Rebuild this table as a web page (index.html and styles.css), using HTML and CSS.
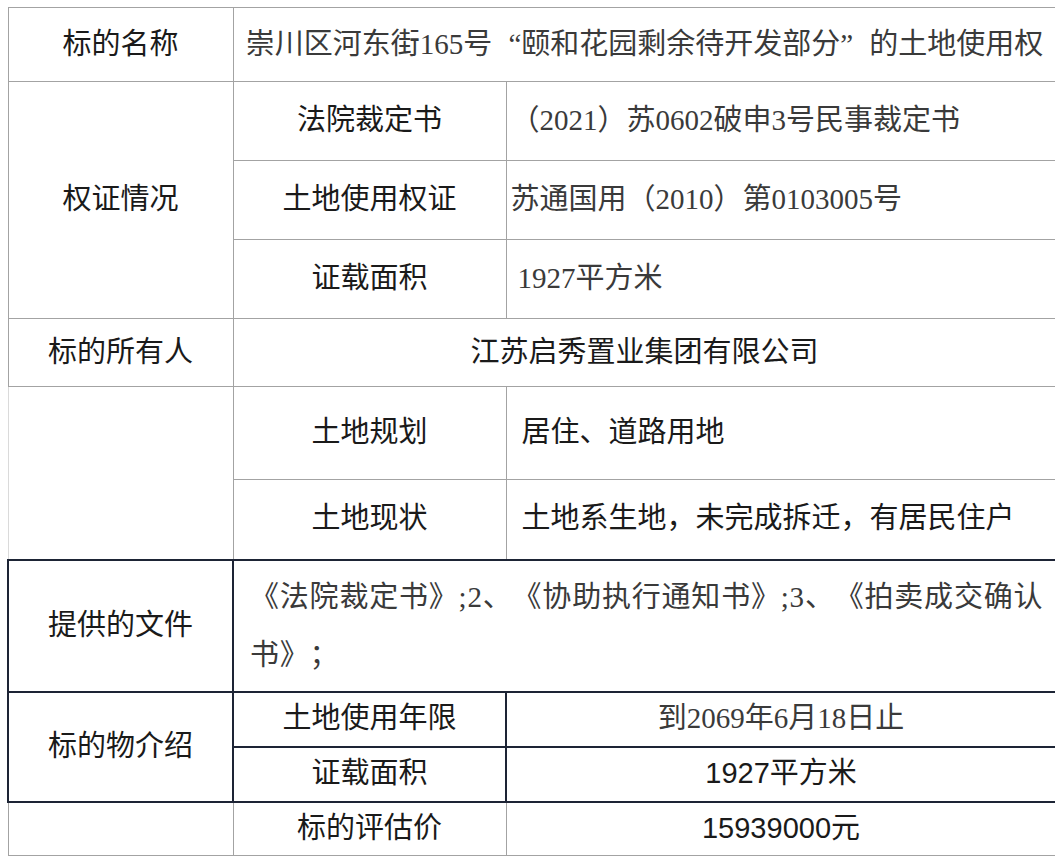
FILE: index.html
```html
<!DOCTYPE html>
<html lang="zh-CN">
<head>
<meta charset="utf-8">
<title>标的信息</title>
<link rel="stylesheet" href="styles.css">
</head>
<body>
<table class="info">
  <colgroup><col class="c1"><col class="c2"><col class="c3"></colgroup>
  <tr class="r1">
    <th>标的名称</th>
    <td colspan="2" class="serif center">崇川区河东街165号<span class="ql">“</span>颐和花园剩余待开发部分<span class="qr">”</span>的土地使用权</td>
  </tr>
  <tr class="r2">
    <th rowspan="3">权证情况</th>
    <th>法院裁定书</th>
    <td class="serif tight">（2021）苏0602破申3号民事裁定书</td>
  </tr>
  <tr class="r3">
    <th>土地使用权证</th>
    <td class="serif tight">苏通国用（2010）第0103005号</td>
  </tr>
  <tr class="r4">
    <th>证载面积</th>
    <td class="serif indent">1927平方米</td>
  </tr>
  <tr class="r5">
    <th>标的所有人</th>
    <td colspan="2" class="center">江苏启秀置业集团有限公司</td>
  </tr>
  <tr class="r6">
    <th rowspan="2" class="blank"></th>
    <th>土地规划</th>
    <td class="pad">居住、道路用地</td>
  </tr>
  <tr class="r7">
    <th>土地现状</th>
    <td class="pad">土地系生地，未完成拆迁，有居民住户</td>
  </tr>
  <tr class="r8 dark">
    <th>提供的文件</th>
    <td colspan="2" class="serif docs">《法院裁定书》;2、《协助执行通知书》;3、《拍卖成交确认书》；</td>
  </tr>
  <tr class="r9 dark">
    <th rowspan="2">标的物介绍</th>
    <th>土地使用年限</th>
    <td class="serif center">到2069年6月18日止</td>
  </tr>
  <tr class="r10 dark">
    <th>证载面积</th>
    <td class="center">1927平方米</td>
  </tr>
  <tr class="r11">
    <th></th>
    <th>标的评估价</th>
    <td class="center">15939000元</td>
  </tr>
</table>
</body>
</html>
```

FILE: styles.css
```css
html, body {
  background: #ffffff;
}
body {
  margin: 7px;
  font-family: "Liberation Sans", "Noto Sans CJK SC", sans-serif;
  color: #1a1a1a;
  text-spacing-trim: space-all;
}
.info {
  border-collapse: collapse;
  table-layout: fixed;
  width: 1048px;
  font-size: 29px;
  text-spacing-trim: space-all;
}
.c1 { width: 225px; }
.c2 { width: 273px; }
.c3 { width: 550px; }

.info th,
.info td {
  border: 1px solid #a3a3a3;
  font-weight: normal;
  vertical-align: middle;
  padding: 0;
  line-height: 1.3;
}
.info th {
  text-align: center;
  color: #1a1a1a;
}
.info td {
  text-align: left;
}
.serif {
  font-family: "Liberation Serif", "Noto Sans CJK SC", serif;
  color: #3a3a3a;
}
.center { text-align: center !important; }
.tight { padding-left: 4px !important; }
.indent { padding-left: 11px !important; }
.pad { padding-left: 15px !important; }

.ql, .qr {
  display: inline-block;
  width: 1em;
}
.ql { text-align: right; }
.qr { text-align: left; }

.r1 { height: 74px; }
.r2, .r3, .r4 { height: 79px; }
.r5 { height: 68px; }
.r6 { height: 93px; }
.r7 { height: 80px; }
.r8 { height: 132px; }
.r9, .r10 { height: 55px; }
.r11 { height: 54px; }

.blank {
  border-left-color: #dadada !important;
}

.dark th,
.dark td {
  border: 2px solid #1d2435;
}

.docs {
  line-height: 58px !important;
  letter-spacing: 0.8px;
  padding: 0 4px 0 16px !important;
}
```
